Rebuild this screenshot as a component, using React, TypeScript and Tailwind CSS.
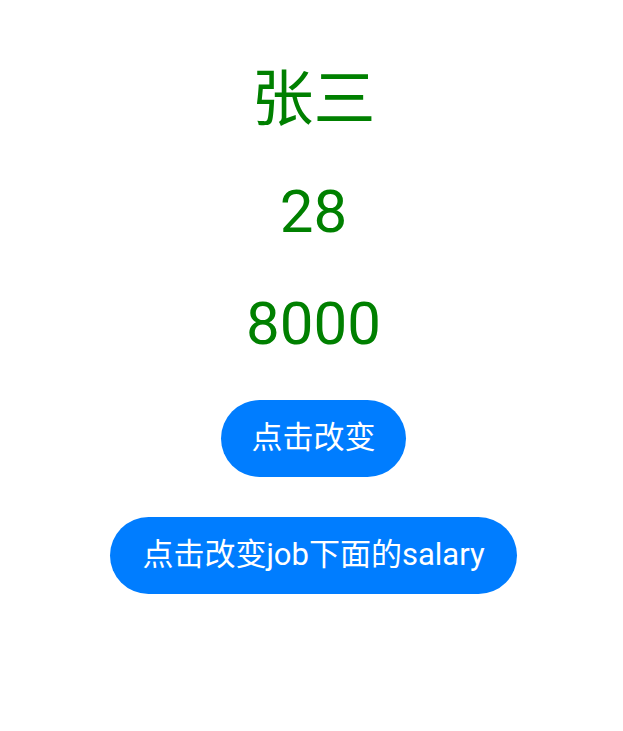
export default function App() {
  const font = { fontFamily: 'Roboto, "Noto Sans CJK SC", sans-serif' };
  return (
    <div
      className="flex min-h-screen w-full flex-col items-center gap-10 bg-white pt-16 pl-1"
      style={font}
    >
      <div className="text-[62px] leading-[72px] text-[#008000]">张三</div>
      <div className="text-[60px] leading-[72px] text-[#008000]">28</div>
      <div className="text-[60px] leading-[72px] text-[#008000]">8000</div>
      <button
        type="button"
        className="flex h-[77px] w-[185px] items-center justify-center rounded-full bg-[#007DFF] text-[31px] font-normal text-white"
      >
        点击改变
      </button>
      <button
        type="button"
        className="flex h-[77px] w-[407px] items-center justify-center rounded-full bg-[#007DFF] text-[31px] font-normal text-white"
      >
        点击改变job下面的salary
      </button>
    </div>
  );
}
